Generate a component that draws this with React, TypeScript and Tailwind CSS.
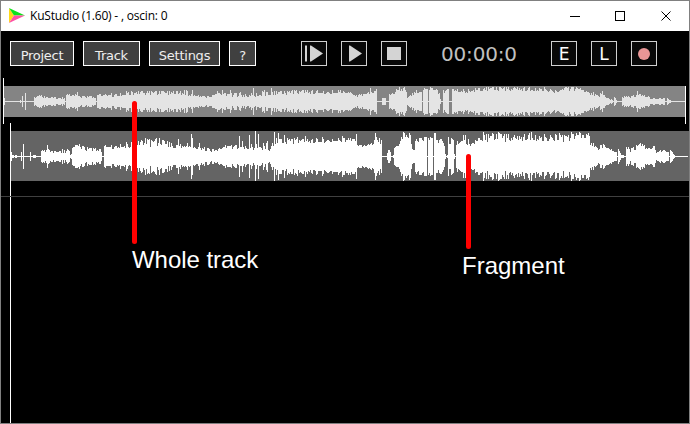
type Point = [x: number, amplitude: number, variation?: number];

const overviewEnvelope: Point[] = [
  [4, 3], [5, 0], [20, 1], [21, 0], [22, 5], [23, 0], [25, 8], [26, 0], [34, 4, 1], [41, 5, 1], [42, 4, 1], [64, 3, 1], [65, 0],
  [66, 6, 1], [77, 6, 1], [79, 4, 1], [90, 4, 1], [95, 2, 1], [96, 0], [97, 6, 1], [111, 6, 2], [130, 8, 2], [160, 8, 2],
  [185, 8, 2], [195, 6, 1], [209, 4, 1], [215, 6, 2], [230, 6, 2], [255, 6, 2], [275, 8, 2], [300, 9, 2], [340, 9, 1],
  [351, 8, 1], [353, 5, 1], [362, 6, 1], [369, 8, 1], [376, 10, 2], [377, 0], [382, 3], [386, 0], [389, 6, 1],
  [394, 8, 1], [396, 12, 2], [405, 12, 2], [407, 4, 1], [411, 7, 2], [417, 9, 1], [421, 8, 2], [422, 0],
  [423, 12, 1], [427, 11, 1], [428, 0], [429, 12, 2], [434, 11, 2], [439, 8, 1], [440, 2], [441, 0], [443, 10, 2],
  [448, 11, 1], [449, 0], [452, 12, 2], [465, 10, 2], [485, 12, 2], [510, 12, 2], [545, 12, 2], [556, 9, 1], [565, 12, 2],
  [580, 12, 1], [589, 8, 2], [602, 6, 1], [608, 3, 1], [612, 1], [613, 0], [614, 4], [616, 1], [617, 0],
  [622, 4, 1], [630, 4, 1], [638, 6, 1], [647, 4, 1], [653, 2, 1], [664, 3, 1], [665, 0], [667, 3], [669, 1], [671, 0], [685, 0],
];

const overviewSpikes: Point[] = [
  [41, 6], [77, 9], [128, 9], [161, 10], [173, 10], [184, 11], [186, 11], [192, 11], [217, 10], [222, 11], [230, 11],
  [234, 8], [240, 9], [253, 13], [262, 10], [264, 11], [271, 13], [274, 10], [292, 11], [340, 11], [370, 13], [637, 10], [602, 10],
];

const fragmentEnvelope: Point[] = [
  [11, 4], [12, 1], [14, 0], [15, 1], [17, 0], [21, 4], [22, 0], [23, 12], [24, 0], [30, 4], [31, 0], [33, 1], [36, 0],
  [41, 6, 1], [45, 5, 1], [49, 8, 2], [51, 4, 1], [60, 5, 2], [68, 5, 2], [71, 2], [72, 8, 1], [76, 11, 2], [85, 7, 2],
  [94, 6, 2], [101, 5, 1], [102, 0], [104, 10, 1], [110, 9, 2], [125, 11, 3], [140, 12, 4], [160, 14, 3], [170, 11, 3],
  [175, 9, 2], [189, 11, 2], [194, 9, 2], [205, 7, 2], [214, 5, 1], [225, 9, 2], [238, 9, 2], [250, 9, 3],
  [262, 10, 4], [270, 9, 3], [275, 15, 3], [295, 15, 2], [315, 15, 2], [335, 16, 2], [350, 16, 2], [356, 15, 2], [358, 10, 1],
  [366, 10, 1], [372, 13, 2], [376, 17, 3], [381, 15, 1], [382, 0], [387, 4, 1], [389, 6], [390, 4], [391, 0], [393, 1],
  [394, 9, 1], [399, 11, 1], [401, 20, 3], [410, 21, 2], [412, 7, 1], [414, 6], [415, 15, 2], [426, 18, 2],
  [427, 0], [428, 17, 2], [432, 17, 2], [433, 0], [434, 23, 1], [435, 23], [436, 14, 2], [440, 16, 3], [444, 10],
  [445, 2], [446, 0], [447, 1], [448, 16, 4], [453, 16, 2], [454, 2], [455, 0], [456, 13, 2], [463, 17, 4], [470, 12, 2],
  [482, 18, 4], [500, 19, 4], [515, 17, 3], [530, 20, 4], [550, 18, 4], [565, 17, 3], [580, 21, 3], [589, 20, 2],
  [590, 13, 2], [598, 8, 2], [603, 11, 1], [610, 7, 1], [615, 4], [617, 0], [618, 7], [620, 3], [621, 1], [624, 0], [626, 8, 2],
  [631, 6, 2], [640, 11, 2], [647, 7, 1], [653, 8, 3], [657, 4, 1], [663, 6, 2], [668, 5, 1], [669, 0], [670, 6],
  [671, 5], [674, 1], [675, 0], [688, 0],
];

const fragmentSpikes: Point[] = [
  [47, 11], [145, 18], [148, 16], [178, 17], [191, 22], [192, 18], [199, 13], [239, 20], [242, 15], [249, 21], [255, 25],
  [258, 22], [267, 15], [274, 24], [276, 18], [278, 23], [284, 21], [297, 19], [305, 20], [316, 18], [322, 19],
  [342, 20], [356, 22], [375, 23], [403, 24], [409, 23], [465, 21], [483, 24], [498, 24], [531, 24], [559, 23], [571, 24], [579, 24],
];

function wavePath(envelope: Point[], spikes: Point[], centre: number) {
  const peaks = new Map(spikes.map(([x, a]) => [x, a]));
  let d = "";
  for (let i = 0; i < envelope.length - 1; i++) {
    const [from, a, variation = 0] = envelope[i];
    const [to, b] = envelope[i + 1];
    for (let x = from; x < to; x++) {
      const level = a === 0 || b === 0 ? a : a + ((b - a) * (x - from)) / (to - from);
      const noise = Math.sin(x * 91.73 + Math.sin(x * 17.19) * 8) * variation;
      const h = peaks.get(x) ?? Math.max(0, Math.round(level + noise));
      d += `M${x} ${centre - h}h1v${h * 2 + 1}h-1z`;
    }
  }
  return d;
}

const overviewWave = wavePath(overviewEnvelope, overviewSpikes, 15);
const fragmentWave = wavePath(fragmentEnvelope, fragmentSpikes, 25);

function MenuButton({ label, size }: { label: string; size: string }) {
  return (
    <button className={`${size} h-[25px] shrink-0 border border-white bg-[#404040] pt-[5px] text-[13px] leading-[18px] tracking-[-0.25px] text-[#eee]`}>
      {label}
    </button>
  );
}

function ToolButton({ children }: { children: React.ReactNode }) {
  return (
    <button className="flex h-[25px] w-[26px] shrink-0 items-center justify-center border border-[#d0d0d0] bg-[#080808]">
      {children}
    </button>
  );
}

function TitleBar() {
  return (
    <header className="flex h-[30px] shrink-0 items-center bg-white text-black">
      <svg className="ml-2 h-4 w-4" viewBox="0 0 16 16">
        <path d="M0 0 5 7.5 0 15z" fill="#ffd91a" />
        <path d="M0 0 16 7.5H5z" fill="#0be31a" />
        <path d="M5 7.5h11L0 15z" fill="#ff50a5" />
      </svg>
      <span className="ml-[5px] whitespace-nowrap font-['Open_Sans',sans-serif] text-[12px] leading-4 tracking-[-0.2px]">
        KuStudio (1.60) - , oscin: 0
      </span>
      <svg className="ml-auto mr-[13px] h-3 w-[104px] overflow-visible" viewBox="0 0 104 12" fill="none" stroke="#000" shapeRendering="crispEdges">
        <path d="M-2 6.5H8M43.5 1.5h9v9h-9z" />
        <path d="m89.5 1.5 9 9m0-9-9 9" shapeRendering="auto" />
      </svg>
    </header>
  );
}

function Toolbar() {
  return (
    <nav className="flex h-[47px] shrink-0 items-start pl-[9px] pt-[10px] font-['DejaVu_Sans',sans-serif]">
      <div className="flex gap-[9px]">
        <MenuButton label="Project" size="w-16" />
        <MenuButton label="Track" size="w-[57px]" />
        <MenuButton label="Settings" size="w-[71px]" />
        <MenuButton label="?" size="w-[27px]" />
      </div>
      <div className="ml-[45px] flex gap-[14px]">
        <ToolButton>
          <svg className="h-[17px] w-5" viewBox="0 0 20 17" fill="#d4d4d4">
            <path d="M1 .5h2v16H1zM6 .5h1l12 8-12 8H6z" />
          </svg>
        </ToolButton>
        <ToolButton>
          <svg className="h-[17px] w-5" viewBox="0 0 20 17" fill="#d4d4d4">
            <path d="M5 .5h1l12 8-12 8H5z" />
          </svg>
        </ToolButton>
        <ToolButton>
          <span className="h-[13px] w-[14px] bg-[#d4d4d4]" />
        </ToolButton>
      </div>
      <span className="ml-[34px] mt-[2px] w-[80px] whitespace-nowrap text-[20px] leading-[22px] tracking-[-0.17px] text-[#c0c0c0]">
        00:00:0
      </span>
      <div className="ml-[30px] flex gap-[14px] text-[17px] leading-none text-white">
        <ToolButton><span className="pt-px">E</span></ToolButton>
        <ToolButton><span className="pt-px">L</span></ToolButton>
        <ToolButton>
          <span className="h-3 w-3 rounded-full bg-[#e99696]" />
        </ToolButton>
      </div>
    </nav>
  );
}

function Overview() {
  return (
    <section className="flex h-[45px] shrink-0 pl-[2px]">
      <i className="h-[46px] w-px shrink-0 bg-white" />
      <svg className="mt-2 h-[31px] w-[681px] shrink-0 bg-[#848484]" viewBox="4 0 681 31" shapeRendering="crispEdges">
        <path d={overviewWave} fill="#e4e4e4" />
      </svg>
      <i className="mt-2 h-[38px] w-px shrink-0 bg-white" />
    </section>
  );
}

function Fragment() {
  return (
    <section className="flex flex-1 pl-[9px]">
      <i className="w-px shrink-0 bg-white" />
      <div className="flex-1 pt-2">
        <svg className="h-[50px] w-[678px] bg-[#646464]" viewBox="11 0 678 50" shapeRendering="crispEdges">
          <path d={fragmentWave} fill="#fff" />
        </svg>
        <div className="-ml-[10px] mt-[15px] h-px bg-[#404040]" />
      </div>
    </section>
  );
}

export default function App() {
  return (
    <div className="relative flex h-[424px] w-[690px] flex-col overflow-hidden border border-[#808080] bg-black">
      <TitleBar />
      <Toolbar />
      <Overview />
      <Fragment />
      <div className="absolute left-[131px] top-[100px] h-[143px] w-[5px] rounded-full bg-[#f00]" />
      <div className="absolute left-[465px] top-[153px] h-[95px] w-[5px] rounded-full bg-[#f00]" />
      <span className="absolute left-[131px] top-[245px] whitespace-nowrap font-['Liberation_Sans',sans-serif] text-[24px] leading-7 tracking-[-0.05px] text-white">
        Whole track
      </span>
      <span className="absolute left-[461px] top-[251px] whitespace-nowrap font-['Liberation_Sans',sans-serif] text-[24px] leading-7 text-white">
        Fragment
      </span>
    </div>
  );
}
